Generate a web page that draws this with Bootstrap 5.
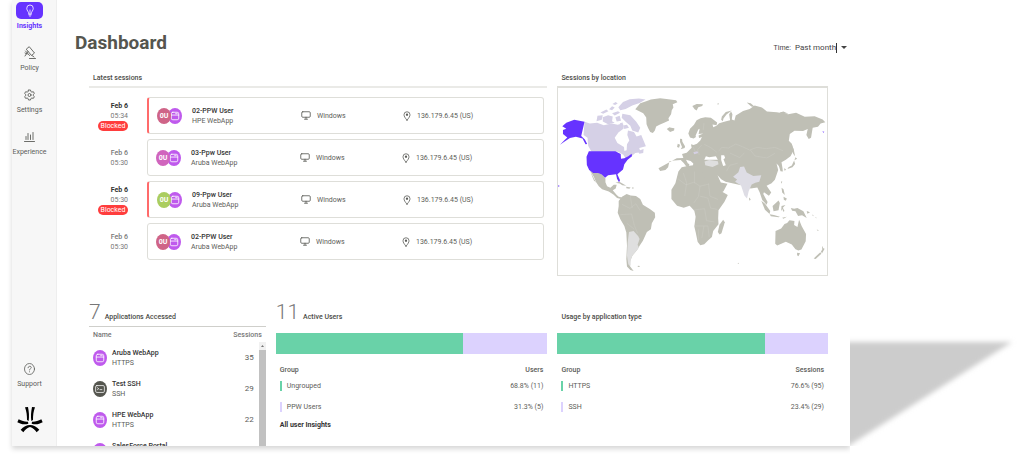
<!DOCTYPE html>
<html lang="en">
<head>
<meta charset="utf-8">
<meta name="viewport" content="width=device-width, initial-scale=1">
<title>Dashboard</title>
<link href="https://cdn.jsdelivr.net/npm/bootstrap@5.3.0/dist/css/bootstrap.min.css" rel="stylesheet">
<style>
  body { font-family: Roboto, "Liberation Sans", sans-serif; font-size: 7px; line-height: 10px; color: #5c5d59; background: #fff; }
  a { color: inherit; text-decoration: none; }
  svg { display: block; flex: none; }
  .ln { fill: none; stroke: currentColor; stroke-linecap: round; stroke-linejoin: round; }
  .page { height: 100vh; padding: 0 0 12px 12px; }
  .app { min-width: 0; background: #fff; box-shadow: 0 3px 5px rgba(0,0,0,.16); clip-path: inset(0 0 -12px -8px); z-index: 1; }
  .cast { width: 17.2%; }
  .side { width: 45px; flex: none; background: #f7f7f7; border-right: 1px solid #eee; padding-top: 2px; padding-bottom: 2px; }
  .side a { display: flex; flex-direction: column; align-items: center; height: 42px; width: 45px; margin-left: -5px; }
  .side .tile { width: 27px; height: 17px; border-radius: 5px; display: grid; place-items: center; margin-bottom: 2px; }
  .side .active { color: #6633ff; font-weight: 700; }
  .side .active .tile { background: #6633ff; color: #fff; }
  .side .brand { padding-top: 4px; }
  .content-area { padding: 30px 22px 0 18px; min-width: 0; overflow: hidden; }
  h1 { font-size: 19px; line-height: 26px; font-weight: 700; color: #55564f; margin: 0; }
  .period { padding-top: 10px; gap: 4px; color: #444; margin-right: -22px; }
  .period input { width: 42px; height: 10px; padding: 0; border: 0; border-right: 1px solid #333; font-size: 8px; line-height: 10px; color: #444; outline: 0; background: none; }
  .period button { border: 0; background: none; padding: 0 3px 0 0; height: 10px; color: #444; }
  .board { display: grid; grid-template-columns: 177fr 272fr 271fr; column-gap: 10px; padding-left: 14px; margin-top: 14px; }
  .wide { grid-column: span 2; }
  .board h2 { font-size: 7px; line-height: 16px; margin: 0; color: #4b4c47; font-weight: 500; padding-left: 4px; }
  .ruled { border-bottom: 2px solid #eaeae7; }
  .sessions { padding: 9px 3px 0 0; display: grid; gap: 5px; }
  .when { width: 39px; flex: none; text-align: right; color: #777; }
  .when b { display: block; font-weight: 500; }
  .stopped .when b { color: #333; font-weight: 700; }
  .pill { display: block; margin-left: 9px; height: 10px; border-radius: 5px; background: #ff3d3d; color: #fff; text-align: center; }
  .tickets { flex: 1; display: flex; align-items: center; height: 37px; margin-left: 19px; border: 1px solid #deded9; border-radius: 3px; padding-left: 8px; }
  .stopped .when { height: 30px; }
  .stopped .tickets { border-left: 2px solid #ff6b6b; }
  .who { width: 144px; gap: 10px; }
  .who b, .apps b { display: block; font-weight: 500; color: #333; }
  .os { width: 102px; gap: 6px; }
  .face { width: 14px; height: 16px; border-radius: 50%; display: grid; place-items: center; color: #fff; font-size: 7px; font-weight: 700; flex: none; }
  .face + .face { margin-left: -3px; }
  .face.front { position: relative; z-index: 1; }
  .web { background: #bf5aed; }
  .rose { background: #cf6487; } .pink { background: #d065bd; } .lime { background: #aacd5f; } .slate { background: #55564f; }
  .map { border: 1px solid #deded9; border-top-width: 2px; }
  .map svg { width: 100%; height: auto; }
  .stats { margin-top: 24px; }
  .total { height: 26px; display: flex; align-items: baseline; gap: 4px; }
  .total span { font-size: 21px; line-height: 24px; font-weight: 300; color: #777; }
  .total h2 { padding: 0; line-height: 24px; }
  .apps { border-top: 1px solid #cfcfcb; }
  .apps-head { height: 15px; padding: 3px 4px 0; font-weight: 500; color: #777; }
  .apps-row { height: 31px; padding: 0 5px 0 4px; gap: 5px; }
  .count { font-size: 8px; margin-left: auto; }
  .scroll { width: 7px; flex: none; background: #f1f1f1; }
  .scroll i { display: block; background: #c1c1c1; height: 110px; }
  .scroll svg { margin: 0 auto; }
  .split { height: 21px; border-radius: 0; background: #dcd2fe; margin-top: 7px; --bs-progress-bar-bg: #69d2a8; }
  .groups { width: 100%; margin-top: 6px; }
  .groups th { font-weight: 500; height: 20px; padding: 0 4px; }
  .groups td { height: 21px; padding: 0 4px 9px; }
  .groups tr > :last-child { text-align: right; }
  .key { display: inline-block; width: 2px; height: 10px; margin-right: 5px; vertical-align: bottom; background: #69d2a8; }
  .key.pale { background: #dcd2fe; }
  .all { display: block; padding-left: 4px; font-weight: 700; color: #333; margin-top: -2px; }
</style>
</head>
<body>
<svg width="0" height="0" class="position-absolute" aria-hidden="true">
  <symbol id="win" viewBox="0 0 16 16"><g class="ln" stroke-width="1.3"><rect x="2" y="2" width="12" height="12" rx="2.5"/><path d="M2 6.5h12M9 4.3h2.6"/></g></symbol>
  <symbol id="term" viewBox="0 0 16 16"><g class="ln" stroke-width="1.2"><rect x="1" y="2.5" width="14" height="11" rx="2"/><path d="m4 6 2 1.5L4 9M8 9h3"/></g></symbol>
  <symbol id="screen" viewBox="0 0 20 18"><g class="ln" stroke-width="1.7"><rect x="1.5" y="1.5" width="17" height="11" rx="2"/><path d="M10 12.5V16M7 16.4h6"/></g></symbol>
  <symbol id="pin" viewBox="0 0 16 20"><path class="ln" stroke-width="1.6" d="M8 18.5C4 13.500 2 10.500 2 7.500a6 6 0 0 1 12 0c0 3-2 6-6 11z"/><circle cx="8" cy="7.500" r="2.300" fill="currentColor"/></symbol>
</svg>
<div class="page d-flex overflow-hidden">
  <div class="app d-flex flex-grow-1 position-relative">
    <nav class="side d-flex flex-column" aria-label="Main">
      <a class="active" href="#"><span class="tile"><svg width="10" height="13" viewBox="0 0 20 26"><path class="ln" stroke-width="1.600" d="M7.500 19C7.500 15 3.500 13.500 3.500 8.500a6.500 6.500 0 0 1 13 0c0 5-4 6.500-4 10.500zM7.500 21.500h5M9 24h2M10 18v-6"/></svg></span>Insights</a>
      <a href="#"><span class="tile"><svg width="12" height="14" viewBox="0 0 24 28"><g class="ln" stroke-width="1.800"><path d="M11 2l10 12-6 5L5 7zM8 11l-6 9M3 10l8 9M2 14l4 2M16 19l4 3M11 25h12"/></g></svg></span>Policy</a>
      <a href="#"><span class="tile"><svg width="11" height="12" viewBox="0 0 22 24"><g class="ln" stroke-width="1.800"><path d="M9 2h4l.7 3 2 1.200 3-.8 2 3.600-2.200 2v2.200l2.200 2-2 3.600-3-.8-2 1.200L13 22H9l-.7-2.800-2-1.200-3 .8-2-3.600 2.200-2V11l-2.200-2 2-3.600 3 .8L8.300 5z"/><circle cx="11" cy="12" r="3"/></g></svg></span>Settings</a>
      <a href="#"><span class="tile"><svg width="11" height="12" viewBox="0 0 22 24"><path class="ln" stroke-width="1.800" d="M1 21h20M4 17v-6M8 17V5M13 17V8M18 17V3"/></svg></span>Experience</a>
      <a href="#" class="mt-auto"><span class="tile"><svg width="11" height="12" viewBox="0 0 22 24"><g class="ln" stroke-width="1.600"><ellipse cx="11" cy="12" rx="10" ry="11"/><path d="M8 9.500c0-4 6.500-4 6.500-.5 0 2.500-3.500 2.500-3.500 5M11 17.500v.3"/></g></svg></span>Support</a>
      <a href="#" class="brand" aria-label="Home"><svg width="26" height="27" viewBox="0 0 78 81"><path d="M24 4l9-1c3 15 4 28 2 42l-5-3c0-13-1-25-6-38zM54 4l-9-1c-3 15-4 28-2 42l5-3c0-13 1-25 6-38zM1 49l4-9c10 5 20 8 28 7l1 6c-12 4-22 2-33-4zM77 49l-4-9c-10 5-20 8-28 7l-1 6c12 4 22 2 33-4zM11 71l8 8c5-8 12-14 20-16 8 2 15 8 20 16l8-8c-8-9-18-14-28-14s-20 5-28 14z"/></svg></a>
    </nav>
    <main class="content-area flex-grow-1">
      <header class="d-flex justify-content-between">
        <h1>Dashboard</h1>
        <div class="period d-flex align-items-center"><label for="period">Time:</label><input id="period" type="text" value="Past month"><button type="button" aria-label="Open periods"><svg width="6" height="4" viewBox="0 0 6 4"><path d="M0 0h6L3 3z" fill="currentColor"/></svg></button></div>
      </header>
      <div class="board">
        <section class="wide">
          <h2 class="ruled">Latest sessions</h2>
          <div class="sessions">
            <article class="d-flex align-items-center stopped">
              <div class="when"><b>Feb 6</b>05:34<span class="pill">Blocked</span></div>
              <div class="tickets"><div class="who d-flex align-items-center"><div class="d-flex"><span class="face front rose">0U</span><span class="face web"><svg width="10" height="10"><use href="#win"/></svg></span></div><div><b>02-PPW User</b>HPE WebApp</div></div><div class="os d-flex align-items-center"><svg width="10" height="9"><use href="#screen"/></svg>Windows</div><div class="os d-flex align-items-center"><svg width="8" height="10"><use href="#pin"/></svg>136.179.6.45 (US)</div></div>
            </article>
            <article class="d-flex align-items-center">
              <div class="when"><b>Feb 6</b>05:30</div>
              <div class="tickets"><div class="who d-flex align-items-center"><div class="d-flex"><span class="face front pink">0U</span><span class="face web"><svg width="10" height="10"><use href="#win"/></svg></span></div><div><b>03-Ppw User</b>Aruba WebApp</div></div><div class="os d-flex align-items-center"><svg width="10" height="9"><use href="#screen"/></svg>Windows</div><div class="os d-flex align-items-center"><svg width="8" height="10"><use href="#pin"/></svg>136.179.6.45 (US)</div></div>
            </article>
            <article class="d-flex align-items-center stopped">
              <div class="when"><b>Feb 6</b>05:30<span class="pill">Blocked</span></div>
              <div class="tickets"><div class="who d-flex align-items-center"><div class="d-flex"><span class="face front lime">0U</span><span class="face web"><svg width="10" height="10"><use href="#win"/></svg></span></div><div><b>09-Ppw User</b>Aruba WebApp</div></div><div class="os d-flex align-items-center"><svg width="10" height="9"><use href="#screen"/></svg>Windows</div><div class="os d-flex align-items-center"><svg width="8" height="10"><use href="#pin"/></svg>136.179.6.45 (US)</div></div>
            </article>
            <article class="d-flex align-items-center">
              <div class="when"><b>Feb 6</b>05:30</div>
              <div class="tickets"><div class="who d-flex align-items-center"><div class="d-flex"><span class="face front rose">0U</span><span class="face web"><svg width="10" height="10"><use href="#win"/></svg></span></div><div><b>02-PPW User</b>Aruba WebApp</div></div><div class="os d-flex align-items-center"><svg width="10" height="9"><use href="#screen"/></svg>Windows</div><div class="os d-flex align-items-center"><svg width="8" height="10"><use href="#pin"/></svg>136.179.6.45 (US)</div></div>
            </article>
          </div>
        </section>
        <section>
          <h2>Sessions by location</h2>
          <div class="map">
            <svg viewBox="22 84 810 564" role="img" aria-label="World map of sessions">
              <g fill="#bfbfb5">
                <path d="M255 148l15-18 20-7 12-4 28-4 25 3 23 3 4 6-14 6 2 10-5 8-2 12-8 12 2 7-15 7-14 6-10 5-4 12-6 8-8-3-6-12-5-12-1-20-9-13z"/>
                <path d="M350 208l8-6 5 2 10 1-1 7-12 5z"/>
                <path d="M118 332l12 8h15l10 5 10 12v11l5 12 10 5 10-9h9l-3 11-9 5 12 15 6 5 10 2-3 5-12-3-10-10-15-10-20-7-10-9-8-12-7-16z"/>
                <path d="M119 336l9 16 9 18-7-8z"/>
                <path d="M195 370l12-3 21 12-12-2-8-5zM228 382l13 2-4 4-9-2zM245 384h5v3h-5z"/>
                <path d="M215 412l14-8 12 4 16 2 13 9 8 17 22 14 14 10 1 14-10 18-3 18-12 8-12 27-10 15-6 10-8 10-8 10-6 15-2 15 12 16-10-3-10-11-2-22 2-40-2-40-6-20-12-20-8-20 3-20v-15z"/>
                <path d="M263 620l6 1-2 3-5-1zM565 611l3 2-4 2zM599 414l4 6-3 4-2-5z"/>
                <path d="M385 336l10-13 18-4 17-2 4 8 16 7 8-4 14 2 13 3 14 28 10 24 8 12 17 10-10 20-18 26-1 24 1 18-16 20-4 18-11 10-12 12-12 3-8-10-6-30-4-16 4-30-4-18-14-15-18 6-20-6-17-20 0-28 12-20z"/>
                <path d="M520 481l5 8-10 33-6 4-5-8 5-22z"/>
                <path d="M380 296l20-1-4-12 14-4 15-15-2-10 8 2 10-4 10-10 5-10-8 3-10-3-7 4-11-3-5-12 5-14 12-12 8-14 12-6 14-3 17 2 19 14-2 8-12-2 2 8 10-4 8-8 18-5 15-4-3-18 6-8 4 8-2 16 8 3 4-15 10-6 12-8 20-6 15-10 22 6 15 12 30 2 34 6 24-4 26 12 30-2 24 10 8 8-14 4-8 10-16 3-2 12-3 18-7 4-7-12 4-18-14 6-26-1-14 10-3 20 9 9 6 20-10 18-14 10-13 8 3 18 1 10-7-1-5-16-7-7 5 19-10 30-10 10-15 8 14 20-7 10-15-11-2 6 13 24-3 8-13-14-8-24-7-14-20 3-22-8-54-12-13-8-11-12 10 22 20 4-12 22-18 12-13 5-9-16-15-32-6-20-8-10-16-2-8-10 2-10-8-8-14-4 15 30-4 4-18-24-9-9-20 2-14 2-4 18-8 8-16 3-5-8z"/>
                <path d="M390 237l6 1 1 8 8 14-1 5-12 4 4-7-6-15zM383 252l7 3-3 9-6-2zM414 312l4 1-1 7-4-2z"/>
                <path d="M427 138l13-6 19 1-2 5-12 4-5 10-6-4zM500 132l8-2-2 4zM514 180l2-10 12-14 18-4-16 12-9 12-2 8zM591 128l12 2 14 12-12-2zM690 158l12-3 8 4 7 2-20 2zM786 180l8 1-4 2z"/>
                <path d="M728 256l5 14 4 20-6-8zM738 293l5 4-8 5zM734 303l3 10-8 10-15 5 3-5 10-5zM705 325l5 6-6 2z"/>
                <path d="M694 367l4-2-1 8zM696 385l6 4 4 18-8-8zM702 412l10 5-3 7-6-3z"/>
                <path d="M635 424l12 10 15 21-2 9-14-13zM660 465l13 2 18 5-3 2-24-3zM669 440l18-17 4 8-4 22-15 3zM696 440l12-3-8 8 5 10-4 2-2-8-4 6zM724 446l10 2 10-2 18 10 10 20-14-8-12 2-8-14-10-2zM772 455l10 4-8 4zM788 465l5 4-2 2zM799 472l3 5-3-1zM802 510l6 4-2 2zM698 475l14-3-10 6z"/>
                <path d="M678 515l17-7 10-14 8-3 7-8 15 2-1 12 10 6 5-22 8 20 13 23-1 22-13 25-9 3-9-4-11-14-18-8-26 11-6-5z"/>
                <path d="M743 581l9 1-5 9-4-3zM818 560l4 7 4 2-8 14-3-6 4-6zM813 579l3 5-17 16-6-2z"/>
              </g>
              <path fill="#fff" d="M437 227l8-18 4-2-3 16 14-2-14 6 2 13-8 5zM514 287l9 0 3 8-5 4 7 18-8 2-6-18zM463 300l5-10 10 3 20-3 6 10z"/>
              <g fill="#d5d0e6">
                <path d="M102 186l16 5 22-2 20 7 24-5 18 4 16-5 2 16-16 12-11 16 8 16 20 12 1 12 7-2 1-18 7-12-6-16 2-14 18 5 8 13 14-4 10 24 4 10-20 5 4 13-16 2-14 12-14 6-8-13-16-9h-80l-10-18-2-24-12-8z"/>
                <path d="M204 142l14-16 20-8 28-2 20 3-18 10-22 8-20 10-16 4zM216 162l24 4 18 20 12 18-6 14-18-6-6-14-14-12-12-12zM157 172l16-6 14 4-2 14 8 5-20 4-16-8zM138 184l3-16 16-2-3 14zM150 158l18-9 6 5-16 8zM176 148l9-9 8 4-8 8zM185 160l18-6 6 5-16 8zM195 172l13-4 4 15-13 2zM218 197l12-2 6 9-14 4zM263 274l17-6-1 12-12 2zM186 132l10-6 6 5-8 4zM208 190l10-2-5 8z"/>
              </g>
              <g fill="#6633ff">
                <path d="M102 186l-10 43 11 10 7 14-5 1-9-18-20-5-18 4-16 10-14 10 14-14 8-8-13-10 0-12 10-4-12-8 12-10 24-9z"/>
                <path d="M115 275h80l16 8 1 14 10-1 12-6 10-8 1 8-13 10-10 14-4 16-17 14 8 18-3 6-6-10-3-14-24 3-9 8-10-10-11-5h-15l-12-9-7-15-1-25zM21 378h5v3h-5zM819 215l6 1-2 3z"/>
              </g>
              <g fill="#dfdfdf">
                <path d="M236 518l14-3 14 16 4 8-6 18 4 8-11 14-9 10-5 15 0 16-7-4-4-26 2-40zM464 306l14-5 26 4 2 9-18 8-22-5z"/>
                <path fill="#dedde5" d="M550 352l16-14 5-16 12-1 8 18 20 10 24-2-6 20-12 3-11 5-9 20-5 22-8-9-10-30-18-11 6-7z"/>
                <path fill="#d5d0e6" d="M430 278l12-3 3 5-12 4z"/>
              </g>
              <path fill="none" stroke="#d2d2ca" stroke-width="1" d="M506 275l10-12 20 2 22-12 20 8 22 10 22-8 28 4 26-4 24 10M602 271l14 18 36 6 24-14M462 190l-2 20M455 256l-12 14 5 16M463 254l20 10 18 14M540 280l30 14 14-14M430 262l8 20M384 358l24 18 24-8 18 12 26-6M400 340l10 30-6 40M434 336v36M450 380l-4 30-14 20M476 372l4 38 24 10M450 410l24 6 8 30 20 4M430 452l34-4 6 36 24 4M432 500h42l4 34M446 510v34M462 500l-6 36M530 335l10-18 24-6M215 435l24 12 18-14 12 20M210 466l34-2 8 34 10 24M240 410l6 36M230 492l22 18"/>
            </svg>
          </div>
        </section>
        <section class="stats">
          <div class="total"><span>7</span><h2>Applications Accessed</h2></div>
          <div class="apps">
            <div class="apps-head d-flex justify-content-between"><span>Name</span><span>Sessions</span></div>
            <div class="d-flex">
              <div class="flex-grow-1">
                <div class="apps-row d-flex align-items-center"><span class="face web"><svg width="10" height="10"><use href="#win"/></svg></span><div><b>Aruba WebApp</b>HTTPS</div><span class="count">35</span></div>
                <div class="apps-row d-flex align-items-center"><span class="face slate"><svg width="10" height="10"><use href="#term"/></svg></span><div><b>Test SSH</b>SSH</div><span class="count">29</span></div>
                <div class="apps-row d-flex align-items-center"><span class="face web"><svg width="10" height="10"><use href="#win"/></svg></span><div><b>HPE WebApp</b>HTTPS</div><span class="count">22</span></div>
                <div class="apps-row d-flex align-items-center"><span class="face web"><svg width="10" height="10"><use href="#win"/></svg></span><div><b>SalesForce Portal</b>&nbsp;</div></div>
              </div>
              <div class="scroll"><svg width="5" height="8" viewBox="0 0 5 8"><path d="M1 5h3L2.500 3z" fill="#777"/></svg><i></i></div>
            </div>
          </div>
        </section>
        <section class="stats">
          <div class="total"><span>11</span><h2>Active Users</h2></div>
          <div class="progress split"><div class="progress-bar" style="width:68.8%"></div></div>
          <table class="groups">
            <thead><tr><th>Group</th><th>Users</th></tr></thead>
            <tbody><tr><td><span class="key"></span>Ungrouped</td><td>68.8% (11)</td></tr><tr><td><span class="key pale"></span>PPW Users</td><td>31.3% (5)</td></tr></tbody>
          </table>
          <a class="all" href="#">All user Insights</a>
        </section>
        <section class="stats">
          <div class="total ps-1"><h2>Usage by application type</h2><span aria-hidden="true">&nbsp;</span></div>
          <div class="progress split"><div class="progress-bar" style="width:76.6%"></div></div>
          <table class="groups">
            <thead><tr><th>Group</th><th>Sessions</th></tr></thead>
            <tbody><tr><td><span class="key"></span>HTTPS</td><td>76.6% (95)</td></tr><tr><td><span class="key pale"></span>SSH</td><td>23.4% (29)</td></tr></tbody>
          </table>
        </section>
      </div>
    </main>
  </div>
  <div class="cast d-flex align-items-end">
    <svg width="174" height="116" viewBox="0 0 174 116" aria-hidden="true"><filter id="soft" x="-20%" y="-20%" width="140%" height="140%"><feGaussianBlur stdDeviation="2.500"/></filter><path d="M-20 12H162L0 115l-20 12z" fill="#ccc" filter="url(#soft)"/></svg>
  </div>
</div>
<script src="https://cdn.jsdelivr.net/npm/bootstrap@5.3.0/dist/js/bootstrap.bundle.min.js"></script>
</body>
</html>
